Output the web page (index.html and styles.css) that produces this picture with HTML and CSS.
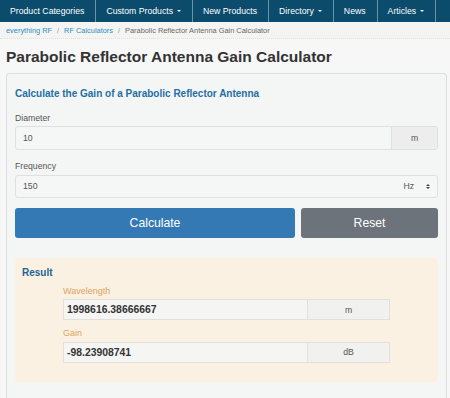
FILE: index.html
```html
<!DOCTYPE html>
<html>
<head>
<meta charset="utf-8">
<link rel="stylesheet" href="styles.css">
</head>
<body>
<nav class="nav">
  <a class="nav-item">Product Categories</a>
  <a class="nav-item">Custom Products <span class="caret"></span></a>
  <a class="nav-item">New Products</a>
  <a class="nav-item">Directory <span class="caret"></span></a>
  <a class="nav-item">News</a>
  <a class="nav-item">Articles <span class="caret"></span></a>
</nav>
<div class="crumbs">
  <a class="crumb-link">everything RF</a><span class="sep">/</span><a class="crumb-link">RF Calculators</a><span class="sep">/</span><span class="crumb-active">Parabolic Reflector Antenna Gain Calculator</span>
</div>
<h1 class="title">Parabolic Reflector Antenna Gain Calculator</h1>
<div class="card">
  <h2 class="card-title">Calculate the Gain of a Parabolic Reflector Antenna</h2>
  <div class="label">Diameter</div>
  <div class="field">
    <div class="field-value">10</div>
    <div class="field-addon">m</div>
  </div>
  <div class="label">Frequency</div>
  <div class="field select">
    <div class="field-value">150</div>
    <div class="select-unit">Hz <span class="updown"><span class="up"></span><span class="down"></span></span></div>
  </div>
  <div class="buttons">
    <button class="btn btn-primary">Calculate</button>
    <button class="btn btn-secondary">Reset</button>
  </div>
  <div class="result">
    <h3 class="result-title">Result</h3>
    <div class="result-body">
      <div class="result-label first">Wavelength</div>
      <div class="result-field">
        <div class="result-value">1998616.38666667</div>
        <div class="result-addon">m</div>
      </div>
      <div class="result-label">Gain</div>
      <div class="result-field">
        <div class="result-value">-98.23908741</div>
        <div class="result-addon">dB</div>
      </div>
    </div>
  </div>
</div>
</body>
</html>
```
FILE: styles.css
```css
* { box-sizing: border-box; }
html, body { margin: 0; padding: 0; }
body {
  font-family: "Liberation Sans", Arial, sans-serif;
  background: #f6f7f6;
  color: #333;
  width: 450px;
  height: 398px;
  overflow: hidden;
}
.nav {
  display: flex;
  height: 22px;
  background: #0b4b6b;
}
.nav-item {
  display: flex;
  align-items: center;
  padding: 0 11px 0 10px;
  color: #fff;
  font-size: 8.7px;
  border-right: 1px solid #6e93a7;
  white-space: nowrap;
}
.caret {
  display: inline-block;
  width: 0;
  height: 0;
  margin-left: 4px;
  border-left: 2.5px solid transparent;
  border-right: 2.5px solid transparent;
  border-top: 2.5px solid #fff;
}
.crumbs {
  height: 17px;
  padding: 0 6px;
  display: flex;
  align-items: center;
  font-size: 7.4px;
  background: #f4f4f2;
  border-bottom: 1px dotted #e2e2dc;
}
.crumb-link { color: #2b8cc4; }
.sep { color: #999; padding: 0 5px; }
.crumb-active { color: #666; }
.title {
  margin: 8px 0 0 6px;
  font-size: 15.5px;
  line-height: 20px;
  font-weight: bold;
  color: #333;
}
.card {
  margin: 6px 3px 0 6px;
  border: 1px solid #dcdddd;
  border-radius: 3px;
  background: #f4f5f5;
  padding: 13px 8px 0 8px;
  height: 340px;
}
.card-title {
  margin: 0;
  font-size: 10px;
  line-height: 14px;
  font-weight: bold;
  color: #1f6fa4;
}
.label {
  font-size: 8.7px;
  line-height: 12px;
  color: #555;
  margin-top: 10.5px;
  margin-bottom: 2.5px;
}
.field {
  display: flex;
  height: 23.5px;
  border: 1px solid #e0e0e0;
  border-radius: 3px;
  background: #f5f6f6;
}
.field-value {
  flex: 1;
  display: flex;
  align-items: center;
  padding-left: 7px;
  font-size: 8.7px;
  color: #555;
}
.field-addon {
  width: 46px;
  display: flex;
  align-items: center;
  justify-content: center;
  font-size: 8.7px;
  color: #555;
  background: #ededed;
  border-left: 1px solid #e0e0e0;
}
.select-unit {
  display: flex;
  align-items: center;
  padding-right: 7px;
  font-size: 8.7px;
  color: #555;
}
.updown {
  display: inline-flex;
  flex-direction: column;
  gap: 1px;
  margin-left: 12px;
}
.up, .down {
  width: 0;
  height: 0;
  border-left: 2px solid transparent;
  border-right: 2px solid transparent;
}
.up { border-bottom: 2.5px solid #444; }
.down { border-top: 2.5px solid #444; }
.buttons {
  display: grid;
  grid-template-columns: 280fr 137fr;
  gap: 6px;
  margin-top: 10px;
}
.btn {
  height: 30px;
  border: 0;
  border-radius: 3px;
  color: #fff;
  font-family: "Liberation Sans", Arial, sans-serif;
  font-size: 12.2px;
  padding: 0;
}
.btn-primary { background: #3479b4; }
.btn-secondary { background: #6c737b; }
.result {
  margin-top: 20px;
  height: 124px;
  background: #fbf1e2;
  border-radius: 2px;
  padding: 8px 7px 0 7px;
}
.result-title {
  margin: 0;
  font-size: 10px;
  line-height: 14px;
  font-weight: bold;
  color: #1c6395;
}
.result-body {
  padding: 0 41px;
}
.result-label {
  font-size: 9px;
  line-height: 12px;
  color: #dda35c;
  margin-top: 7px;
  margin-bottom: 2.5px;
}
.result-label.first { margin-top: 4.5px; }
.result-field {
  display: flex;
  height: 21px;
  border: 1px solid #e2e0dc;
  background: #f5f5f4;
}
.result-value {
  flex: 1;
  display: flex;
  align-items: center;
  padding-left: 3px;
  font-size: 10.4px;
  font-weight: bold;
  color: #333;
}
.result-addon {
  width: 82px;
  display: flex;
  align-items: center;
  justify-content: center;
  font-size: 8.7px;
  color: #555;
  background: #f1f1f0;
  border-left: 1px solid #e2e0dc;
}
```
